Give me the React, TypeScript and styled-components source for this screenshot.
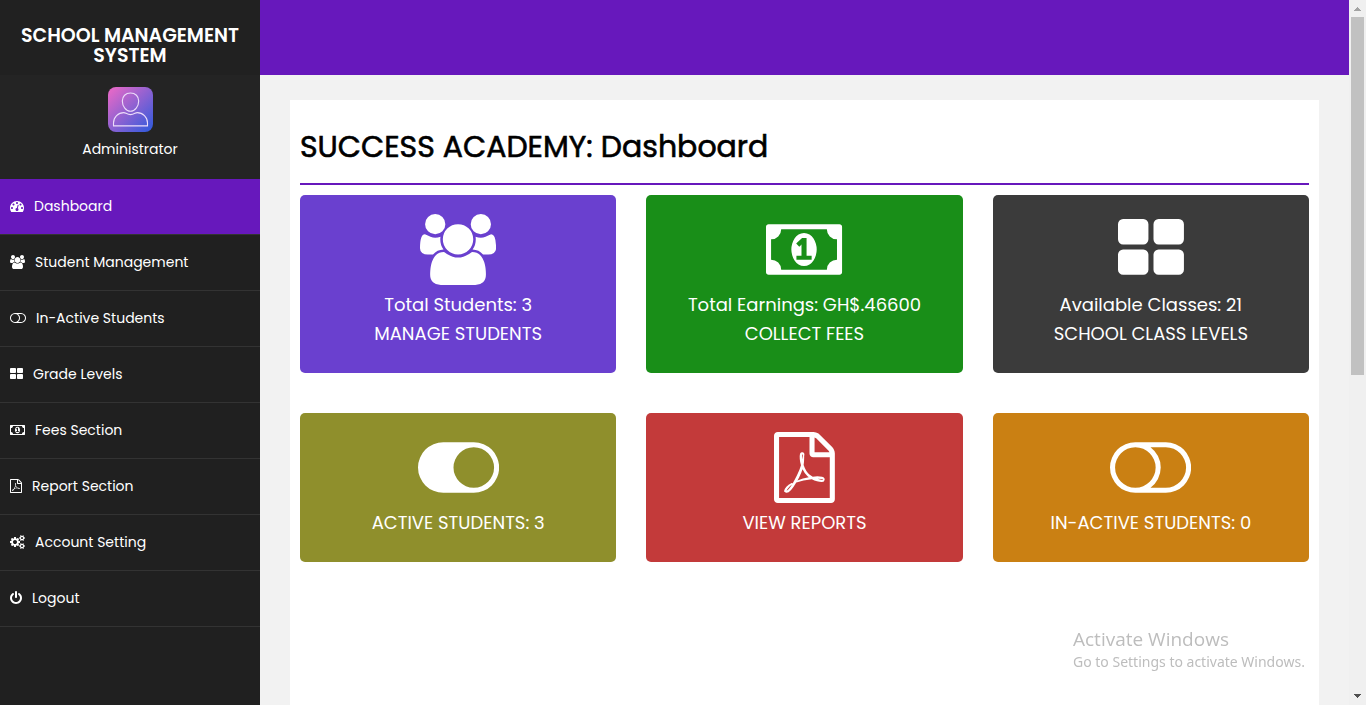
import React from 'react';
import styled, { createGlobalStyle } from 'styled-components';

const PURPLE = '#6718bc';

const GlobalStyle = createGlobalStyle`
  *, *::before, *::after { box-sizing: border-box; }
  body {
    margin: 0;
    background: #f2f2f2;
    font-family: Poppins, Inter, "Liberation Sans", sans-serif;
  }
  h1, p, ul { margin: 0; padding: 0; }
  a { color: inherit; text-decoration: none; }
`;

type IconName = 'gauge' | 'users' | 'toggleOn' | 'toggleOff' | 'grid' | 'money' | 'pdf' | 'cogs' | 'power';

const ICONS: Record<IconName, { x: number; w: number; d: string }> = {
  gauge: {
    x: 0, w: 1792,
    d: 'M384 1152q0-53-37.5-90.5t-90.5-37.5-90.5 37.5-37.5 90.5 37.5 90.5 90.5 37.5 90.5-37.5 37.5-90.5zm192-448q0-53-37.5-90.5t-90.5-37.5-90.5 37.5-37.5 90.5 37.5 90.5 90.5 37.5 90.5-37.5 37.5-90.5zm428 481l101-382q6-26-7.5-48.5t-38.5-29.5-48 6.5-30 39.5l-101 382q-60 5-107 43.5t-63 98.5q-20 77 20 146t117 89 146-20 89-117q16-60-6-117t-72-91zm660-33q0-53-37.5-90.5t-90.5-37.5-90.5 37.5-37.5 90.5 37.5 90.5 90.5 37.5 90.5-37.5 37.5-90.5zm-640-640q0-53-37.5-90.5t-90.5-37.5-90.5 37.5-37.5 90.5 37.5 90.5 90.5 37.5 90.5-37.5 37.5-90.5zm448 192q0-53-37.5-90.5t-90.5-37.5-90.5 37.5-37.5 90.5 37.5 90.5 90.5 37.5 90.5-37.5 37.5-90.5zm320 448q0 261-141 483-19 29-54 29h-1402q-35 0-54-29-141-221-141-483 0-182 71-348t191-286 286-191 348-71 348 71 286 191 191 286 71 348z',
  },
  users: {
    x: 64, w: 1920,
    d: 'M657 896q-162 5-265 128h-134q-82 0-138-40.5t-56-118.5q0-353 124-353 6 0 43.5 21t97.5 42.5 119 21.5q67 0 133-23-5 37-5 66 0 159 81 256zm1071 637q0 120-73 189.5t-194 69.5h-874q-121 0-194-69.5t-73-189.5q0-53 3.5-103.5t14-109 26.5-108.5 43-97.5 62-81 85.5-53.5 111.5-20q10 0 43 21.5t73 48 107 48 135 21.5 135-21.5 107-48 73-48 43-21.5q61 0 111.5 20t85.5 53.5 62 81 43 97.5 26.5 108.5 14 109 3.5 103.5zm-1024-1277q0 106-75 181t-181 75-181-75-75-181 75-181 181-75 181 75 75 181zm704 384q0 159-112.5 271.5t-271.5 112.5-271.5-112.5-112.5-271.5 112.5-271.5 271.5-112.5 271.5 112.5 112.5 271.5zm576 225q0 78-56 118.5t-138 40.5h-134q-103-123-265-128 81-97 81-256 0-29-5-66 66 23 133 23 59 0 119-21.5t97.5-42.5 43.5-21q124 0 124 353zm-128-609q0 106-75 181t-181 75-181-75-75-181 75-181 181-75 181 75 75 181z',
  },
  toggleOn: {
    x: 0, w: 2048,
    d: 'M0 896q0-130 51-248.5t136.5-204 204-136.5 248.5-51h768q130 0 248.5 51t204 136.5 136.5 204 51 248.5-51 248.5-136.5 204-204 136.5-248.5 51h-768q-130 0-248.5-51t-204-136.5-136.5-204-51-248.5zm1408 512q104 0 198.5-40.5t163.5-109.5 109.5-163.5 40.5-198.5-40.5-198.5-109.5-163.5-163.5-109.5-198.5-40.5-198.5 40.5-163.5 109.5-109.5 163.5-40.5 198.5 40.5 198.5 109.5 163.5 163.5 109.5 198.5 40.5z',
  },
  toggleOff: {
    x: 0, w: 2048,
    d: 'M1152 896q0-104-40.5-198.5t-109.5-163.5-163.5-109.5-198.5-40.5-198.5 40.5-163.5 109.5-109.5 163.5-40.5 198.5 40.5 198.5 109.5 163.5 163.5 109.5 198.5 40.5 198.5-40.5 163.5-109.5 109.5-163.5 40.5-198.5zm768 0q0-104-40.5-198.5t-109.5-163.5-163.5-109.5-198.5-40.5h-386q119 90 188.5 224t69.5 288-69.5 288-188.5 224h386q104 0 198.5-40.5t163.5-109.5 109.5-163.5 40.5-198.5zm128 0q0 130-51 248.5t-136.5 204-204 136.5-248.5 51h-768q-130 0-248.5-51t-204-136.5-136.5-204-51-248.5 51-248.5 136.5-204 204-136.5 248.5-51h768q130 0 248.5 51t204 136.5 136.5 204 51 248.5z',
  },
  grid: {
    x: 64, w: 1664,
    d: 'M832 1024v384q0 52-38 90t-90 38h-512q-52 0-90-38t-38-90v-384q0-52 38-90t90-38h512q52 0 90 38t38 90zm0-768v384q0 52-38 90t-90 38h-512q-52 0-90-38t-38-90v-384q0-52 38-90t90-38h512q52 0 90 38t38 90zm896 768v384q0 52-38 90t-90 38h-512q-52 0-90-38t-38-90v-384q0-52 38-90t90-38h512q52 0 90 38t38 90zm0-768v384q0 52-38 90t-90 38h-512q-52 0-90-38t-38-90v-384q0-52 38-90t90-38h512q52 0 90 38t38 90z',
  },
  money: {
    x: 64, w: 1920,
    d: 'M832 1152h384v-96h-128v-448h-114l-148 137 77 80q42-37 55-57h2v288h-128v96zm512-256q0 70-21 142t-59.5 134-101.5 101-138 39-138-39-101.5-101-59.5-134-21-142 21-142 59.5-134 101.5-101 138-39 138 39 101.5 101 59.5 134 21 142zm512 256v-512q-106 0-181-75t-75-181h-1152q0 106-75 181t-181 75v512q106 0 181 75t75 181h1152q0-106 75-181t181-75zm128-832v1152q0 26-19 45t-45 19h-1792q-26 0-45-19t-19-45v-1152q0-26 19-45t45-19h1792q26 0 45 19t19 45z',
  },
  pdf: {
    x: 128, w: 1536,
    d: 'M1596 380q28 28 48 76t20 88v1152q0 40-28 68t-68 28h-1344q-40 0-68-28t-28-68v-1600q0-40 28-68t68-28h896q40 0 88 20t76 48zm-444-244v376h376q-10-29-22-41l-313-313q-12-12-41-22zm384 1528v-1024h-416q-40 0-68-28t-28-68v-416h-768v1536h1280zm-514-593q33 26 84 56 59-7 117-7 147 0 177 49 16 22 2 52 0 1-1 2l-2 2v1q-6 38-71 38-48 0-115-20t-130-53q-221 24-392 83-153 262-242 262-15 0-28-7l-24-12q-1-1-6-5-10-10-6-36 9-40 56-91.5t132-96.5q14-9 23 6 2 2 2 4 52-85 107-197 68-136 104-262-24-82-30.5-159.5t6.5-127.5q11-40 42-40h22q23 0 35 15 18 21 9 68-2 6-4 8 1 3 1 8v30q-2 123-14 192 55 164 146 238zm-576 411q52-24 137-158-51 40-87.5 84t-49.5 74zm398-920q-15 42-2 132 1-7 7-44 0-3 7-43 1-4 4-8-1-1-1-2-1-2-1-3-1-22-13-36 0 1-1 2v2zm-124 661q135-54 284-81-2-1-13-9.5t-16-13.5q-76-67-127-176-27 86-83 197-30 56-45 83zm646-16q-24-24-140-24 76 28 124 28 14 0 18-1 0-1-2-3z',
  },
  cogs: {
    x: -64, w: 1920,
    d: 'M832 896q0-106-75-181t-181-75-181 75-75 181 75 181 181 75 181-75 75-181zm768 512q0-52-38-90t-90-38-90 38-38 90q0 53 37.5 90.5t90.5 37.5 90.5-37.5 37.5-90.5zm0-1024q0-52-38-90t-90-38-90 38-38 90q0 53 37.5 90.5t90.5 37.5 90.5-37.5 37.5-90.5zm-384 421v185q0 10-7 19.5t-16 10.5l-155 24q-11 35-32 76 34 48 90 115 7 11 7 20 0 12-7 19-23 30-82.5 89.5t-78.5 59.5q-11 0-21-7l-115-90q-37 19-77 31-11 108-23 155-7 24-30 24h-186q-11 0-20-7.5t-10-17.5l-23-153q-34-10-75-31l-118 89q-7 7-20 7-11 0-21-8-144-133-144-160 0-9 7-19 10-14 41-53t47-61q-23-44-35-82l-152-24q-10-1-17-9.5t-7-19.5v-185q0-10 7-19.5t16-10.5l155-24q11-35 32-76-34-48-90-115-7-11-7-20 0-12 7-20 22-30 82-89t79-59q11 0 21 7l115 90q34-18 77-32 11-108 23-154 7-24 30-24h186q11 0 20 7.5t10 17.5l23 153q34 10 75 31l118-89q8-7 20-7 11 0 21 8 144 133 144 160 0 8-7 19-12 16-42 54t-45 60q23 48 34 82l152 23q10 2 17 10.5t7 19.5zm640 533v140q0 16-149 31-12 27-30 52 51 113 51 138 0 4-4 7-122 71-124 71-8 0-46-47t-52-68q-20 2-30 2t-30-2q-14 21-52 68t-46 47q-2 0-124-71-4-3-4-7 0-25 51-138-18-25-30-52-149-15-149-31v-140q0-16 149-31 13-29 30-52-51-113-51-138 0-4 4-7 4-2 35-20t59-34 30-16q8 0 46 46.5t52 67.5q20-2 30-2t30 2q51-71 92-112l6-2q4 0 124 70 4 3 4 7 0 25-51 138 17 23 30 52 149 15 149 31zm0-1024v140q0 16-149 31-12 27-30 52 51 113 51 138 0 4-4 7-122 71-124 71-8 0-46-47t-52-68q-20 2-30 2t-30-2q-14 21-52 68t-46 47q-2 0-124-71-4-3-4-7 0-25 51-138-18-25-30-52-149-15-149-31v-140q0-16 149-31 13-29 30-52-51-113-51-138 0-4 4-7 4-2 35-20t59-34 30-16q8 0 46 46.5t52 67.5q20-2 30-2t30 2q51-71 92-112l6-2q4 0 124 70 4 3 4 7 0 25-51 138 17 23 30 52 149 15 149 31z',
  },
  power: {
    x: 128, w: 1536,
    d: 'M1664 896q0 156-61 298t-164 245-245 164-298 61-298-61-245-164-164-245-61-298q0-182 80.5-343t226.5-270q43-32 95.5-25t83.5 50q32 42 24.5 94.5t-49.5 84.5q-98 74-151.5 181t-53.5 228q0 104 40.5 198.5t109.5 163.5 163.5 109.5 198.5 40.5 198.5-40.5 163.5-109.5 109.5-163.5 40.5-198.5q0-121-53.5-228t-151.5-181q-42-32-49.5-84.5t24.5-94.5q31-43 84-50t95 25q146 109 226.5 270t80.5 343zm-640-768v640q0 52-38 90t-90 38-90-38-38-90v-640q0-52 38-90t90-38 90 38 38 90z',
  },
};

const Glyph = styled.svg<{ $size: number }>`
  display: block;
  flex: none;
  height: ${(p) => p.$size}px;
  width: auto;
  fill: currentColor;
`;

function Icon({ name, size }: { name: IconName; size: number }) {
  const { x, w, d } = ICONS[name];
  return (
    <Glyph $size={size} viewBox={`${x} 0 ${w} 1792`} aria-hidden="true">
      <path d={d} />
    </Glyph>
  );
}

const Shell = styled.div`
  display: grid;
  grid-template-columns: 260px minmax(0, 1fr) 17px;
  height: 100vh;
  overflow: hidden;
`;

const Sidebar = styled.aside`
  background: #202020;
  color: #fff;
`;

const Brand = styled.div`
  padding: 26px 16px 9px;
  background: #212121;
  font-size: 19px;
  font-weight: 600;
  line-height: 20px;
  text-align: center;
`;

const Profile = styled.div`
  display: flex;
  flex-direction: column;
  align-items: center;
  gap: 6px;
  height: 104px;
  padding-top: 12px;
  background: #242424;
  font-size: 14px;
  line-height: 22px;
`;

const Avatar = styled.svg`
  display: block;
  width: 45px;
  height: 45px;
`;

const Menu = styled.ul`
  list-style: none;
`;

const MenuLink = styled.a<{ $active?: boolean }>`
  display: flex;
  align-items: center;
  gap: 10px;
  height: 56px;
  padding: 0 10px 2px;
  border-bottom: 1px solid #333;
  background: ${(p) => (p.$active ? PURPLE : 'transparent')};
  font-size: 14px;
  line-height: 22px;
`;

const Main = styled.main`
  display: flex;
  flex-direction: column;
  min-height: 0;
`;

const TopBar = styled.header`
  flex: none;
  height: 75px;
  background: ${PURPLE};
`;

const Panel = styled.section`
  flex: 1;
  margin: 25px 30px 0;
  padding: 0 10px;
  background: #fff;
`;

const Title = styled.h1`
  padding: 22px 0 12px;
  border-bottom: 2px solid ${PURPLE};
  color: #000;
  font-size: 30px;
  font-weight: 400;
  line-height: 49px;
  -webkit-text-stroke: 0.02em #000;
`;

const Cards = styled.div`
  display: grid;
  grid-template-columns: repeat(3, minmax(0, 1fr));
  gap: 40px 30px;
  padding-top: 10px;
`;

const Card = styled.a<{ $color: string }>`
  display: flex;
  flex-direction: column;
  align-items: center;
  padding: 19px 16px 25px;
  border-radius: 5px;
  background: ${(p) => p.$color};
  color: #fff;
  text-align: center;
`;

const CardText = styled.div`
  padding-top: 5px;
  font-size: 18px;
  line-height: 29px;
`;

const ScrollTrack = styled.div`
  display: flex;
  flex-direction: column;
  align-items: center;
  justify-content: space-between;
  background: #f0f0f0;
`;

const ScrollArrow = styled.svg`
  display: block;
  flex: none;
  width: 17px;
  height: 17px;
`;

const ScrollRun = styled.div`
  flex: 1;
  width: 13px;
`;

const ScrollThumb = styled.div`
  height: calc(100% * 8 / 15);
  background: #c1c1c1;
`;

const Notice = styled.div`
  position: fixed;
  right: 57px;
  bottom: 33px;
  min-width: 236px;
  color: #bdbdbd;
  font-family: "Segoe UI", "Noto Sans", sans-serif;
  font-size: 14px;
  line-height: 20px;
  pointer-events: none;
`;

const NoticeTitle = styled.p`
  font-family: "Segoe UI", "Open Sans", sans-serif;
  font-size: 19px;
  line-height: 26px;
`;

const MENU: { icon: IconName; label: string; active?: boolean }[] = [
  { icon: 'gauge', label: 'Dashboard', active: true },
  { icon: 'users', label: 'Student Management' },
  { icon: 'toggleOff', label: 'In-Active Students' },
  { icon: 'grid', label: 'Grade Levels' },
  { icon: 'money', label: 'Fees Section' },
  { icon: 'pdf', label: 'Report Section' },
  { icon: 'cogs', label: 'Account Setting' },
  { icon: 'power', label: 'Logout' },
];

const CARDS: { icon: IconName; color: string; lines: string[] }[] = [
  { icon: 'users', color: '#6a40cf', lines: ['Total Students: 3', 'MANAGE STUDENTS'] },
  { icon: 'money', color: '#198e18', lines: ['Total Earnings: GH$.46600', 'COLLECT FEES'] },
  { icon: 'grid', color: '#3b3b3b', lines: ['Available Classes: 21', 'SCHOOL CLASS LEVELS'] },
  { icon: 'toggleOn', color: '#8f8f2c', lines: ['ACTIVE STUDENTS: 3'] },
  { icon: 'pdf', color: '#c33a3a', lines: ['VIEW REPORTS'] },
  { icon: 'toggleOff', color: '#ca8013', lines: ['IN-ACTIVE STUDENTS: 0'] },
];

export default function App() {
  return (
    <>
      <GlobalStyle />
      <Shell>
        <Sidebar>
          <Brand>SCHOOL MANAGEMENT SYSTEM</Brand>
          <Profile>
            <Avatar viewBox="0 0 45 45" role="img" aria-label="Administrator avatar">
              <defs>
                <linearGradient id="avatarFill" x1="0" y1="0" x2="1" y2="1">
                  <stop offset="0.08" stopColor="#e068c8" />
                  <stop offset="0.92" stopColor="#3b5bdb" />
                </linearGradient>
              </defs>
              <rect width="45" height="45" rx="8" fill="url(#avatarFill)" />
              <g fill="none" stroke="#ecdcfa" strokeWidth="1.1" strokeLinejoin="round">
                <path d="M22.500 6c4.900 0 8.200 3.300 8.200 8 0 5.200-3.800 10.300-8.200 10.300s-8.200-5.100-8.200-10.300c0-4.700 3.300-8 8.200-8z" />
                <path d="M15.800 25.600c1.800 0 3.300 2 6.700 2s4.900-2 6.700-2c5.600 0 10.300 4.600 10.300 10.400v2.900h-34V36c0-5.800 4.700-10.400 10.300-10.400z" />
              </g>
            </Avatar>
            <span>Administrator</span>
          </Profile>
          <nav aria-label="Main menu">
            <Menu>
              {MENU.map((m) => (
                <li key={m.label}>
                  <MenuLink href="#" $active={m.active}>
                    <Icon name={m.icon} size={14} />
                    <span>{m.label}</span>
                  </MenuLink>
                </li>
              ))}
            </Menu>
          </nav>
        </Sidebar>
        <Main>
          <TopBar />
          <Panel>
            <Title>SUCCESS ACADEMY: Dashboard</Title>
            <Cards>
              {CARDS.map((c) => (
                <Card key={c.lines[0]} href="#" $color={c.color}>
                  <Icon name={c.icon} size={71} />
                  <CardText>
                    {c.lines.map((line) => (
                      <p key={line}>{line}</p>
                    ))}
                  </CardText>
                </Card>
              ))}
            </Cards>
          </Panel>
        </Main>
        <ScrollTrack aria-hidden="true">
          <ScrollArrow viewBox="0 0 17 17">
            <path d="M8 7h1v1h1v1h1v1h1v1H5v-1h1V9h1V8h1z" fill="#a3a3a3" />
          </ScrollArrow>
          <ScrollRun>
            <ScrollThumb />
          </ScrollRun>
          <ScrollArrow viewBox="0 0 17 17">
            <path d="M5 6h7v1h-1v1h-1v1H9v1H8V9H7V8H6V7H5z" fill="#505050" />
          </ScrollArrow>
        </ScrollTrack>
      </Shell>
      <Notice>
        <NoticeTitle>Activate Windows</NoticeTitle>
        <p>Go to Settings to activate Windows.</p>
      </Notice>
    </>
  );
}
